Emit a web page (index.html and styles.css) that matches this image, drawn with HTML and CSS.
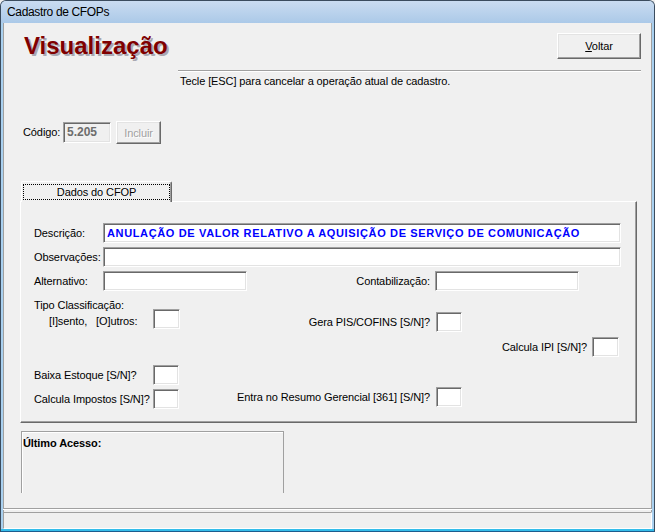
FILE: index.html
```html
<!DOCTYPE html>
<html lang="pt-BR">
<head>
<meta charset="utf-8">
<title>Cadastro de CFOPs</title>
<link rel="stylesheet" href="styles.css">
</head>
<body>
<div class="window">
  <div class="titlebar"><span class="title-text">Cadastro de CFOPs</span></div>
  <div class="frame">
    <div class="client">
      <div class="header">
        <h1 class="page-title">Visualização</h1>
        <button class="btn btn-voltar"><u>V</u>oltar</button>
      </div>
      <div class="rule"></div>
      <p class="hint">Tecle [ESC] para cancelar a operação atual de cadastro.</p>

      <div class="code-row">
        <span class="lbl code-lbl">Código:</span>
        <span class="field field-code">5.205</span>
        <button class="btn btn-incluir" disabled>Incluir</button>
      </div>

      <div class="tabs">
        <div class="tab"><span class="tab-focus">Dados do CFOP</span></div>
      </div>

      <div class="panel">
        <div class="row r-desc">
          <span class="lbl lbl-col">Descrição:</span>
          <span class="field field-wide desc-value">ANULAÇÃO DE VALOR RELATIVO A AQUISIÇÃO DE SERVIÇO DE COMUNICAÇÃO</span>
        </div>
        <div class="row r-obs">
          <span class="lbl lbl-col">Observações:</span>
          <span class="field field-wide"></span>
        </div>
        <div class="row r-alt">
          <span class="lbl lbl-col">Alternativo:</span>
          <span class="field field-mid"></span>
          <span class="lbl lbl-right w-contab">Contabilização:</span>
          <span class="field field-mid gap5"></span>
        </div>
        <div class="row r-tipo">
          <div class="tipo-label">
            <div>Tipo Classificação:</div>
            <div class="tipo-sub">[I]sento,&nbsp;&nbsp; [O]utros:</div>
          </div>
          <span class="field field-small tipo-input"></span>
          <div class="pair pair-pis">
            <span class="lbl lbl-right w-pis">Gera PIS/COFINS [S/N]?</span>
            <span class="field field-small gap6"></span>
          </div>
        </div>
        <div class="row r-ipi">
          <span class="lbl lbl-right w-ipi">Calcula IPI [S/N]?</span>
          <span class="field field-small2 gap5"></span>
        </div>
        <div class="row r-baixa">
          <span class="lbl w-left">Baixa Estoque [S/N]?</span>
          <span class="field field-small"></span>
        </div>
        <div class="row r-calc">
          <div class="pair pair-imp">
            <span class="lbl w-left">Calcula Impostos [S/N]?</span>
            <span class="field field-small"></span>
          </div>
          <div class="pair">
            <span class="lbl lbl-right w-resumo">Entra no Resumo Gerencial [361] [S/N]?</span>
            <span class="field field-small gap6"></span>
          </div>
        </div>
      </div>

      <div class="access">
        <span class="access-title">Último Acesso:</span>
      </div>

      <div class="footer">
        <div class="sep"></div>
        <div class="status"></div>
      </div>
    </div>
  </div>
</div>
</body>
</html>
```

FILE: styles.css
```css
* { box-sizing: border-box; }
html, body { margin: 0; padding: 0; }
body {
  width: 655px;
  height: 532px;
  overflow: hidden;
  background: #f0f0f0;
  font-family: "Liberation Sans", Arial, sans-serif;
  font-size: 11px;
  letter-spacing: -0.1px;
  color: #000;
}

.window {
  width: 655px;
  height: 532px;
  border: 1px solid #3b4c5e;
  border-bottom-color: #1d5c8e;
  border-radius: 6px 6px 0 0;
  display: flex;
  flex-direction: column;
  overflow: hidden;
  background: #a9d0ef;
}

.titlebar {
  height: 22px;
  flex: none;
  background: linear-gradient(#cadcf1, #abc9e8);
  padding-left: 6px;
  display: flex;
  align-items: center;
}
.title-text {
  font-size: 12px;
  line-height: 14px;
  letter-spacing: -0.35px;
  color: #000;
}

.frame {
  flex: 1;
  display: flex;
  padding: 0 2px;
  border-bottom: 2px solid #35bdea;
}

.client {
  flex: 1;
  display: flex;
  flex-direction: column;
  background: #f0f0f0;
  box-shadow: inset 1px 0 #a0a0a0, inset -1px 0 #a0a0a0;
}
.client > * { flex: none; }

/* header */
.header {
  display: flex;
  justify-content: space-between;
  align-items: flex-start;
  height: 36px;
  padding: 10px 11px 0 21px;
}
.page-title {
  margin: 0;
  font-size: 24px;
  line-height: 26px;
  font-weight: bold;
  letter-spacing: 0;
  color: #800000;
  text-shadow: 2px 2px 0 #a9a9b2;
}

.btn {
  font-family: inherit;
  font-size: 11px;
  letter-spacing: -0.1px;
  color: #000;
  background: #f0f0f0;
  border: 1px solid;
  border-color: #fff #696969 #696969 #fff;
  box-shadow: inset -1px -1px 0 #a0a0a0, inset 1px 1px 0 #e3e3e3;
  padding: 0;
  margin: 0;
}
.btn u { text-decoration: underline; }
.btn-voltar { width: 84px; height: 26px; }
.btn-incluir {
  width: 45px;
  height: 23px;
  margin-left: 5px;
  color: #a0a0a0;
  text-shadow: 1px 1px 0 #fff;
}

.rule {
  margin: 11px 11px 0 175px;
  border-top: 1px solid #a0a0a0;
  border-bottom: 1px solid #fff;
}
.hint {
  margin: 3px 0 0 177px;
  line-height: 13px;
}

/* generic text/field */
.lbl { display: block; line-height: 13px; white-space: nowrap; }
.lbl-right { text-align: right; }

.field {
  display: block;
  height: 20px;
  background: #fff;
  border: 1px solid;
  border-color: #a0a0a0 #fff #fff #a0a0a0;
  box-shadow: inset 1px 1px 0 #696969, inset -1px -1px 0 #e3e3e3;
  flex: none;
}

/* codigo row */
.code-row {
  display: flex;
  align-items: center;
  height: 23px;
  margin: 33px 0 0 20px;
}
.code-lbl { width: 40px; }
.field-code {
  width: 48px;
  height: 21px;
  background: #f0f0f0;
  color: #6d6d6d;
  font-size: 12px;
  font-weight: bold;
  letter-spacing: 0;
  line-height: 19px;
  padding-left: 3px;
}

/* tabs */
.tabs {
  position: relative;
  z-index: 1;
  display: flex;
  height: 21px;
  margin: 37px 0 -1px 18px;
}
.tab {
  width: 151px;
  height: 21px;
  background: #f0f0f0;
  border-top: 1px solid #fff;
  border-left: 1px solid #fff;
  border-right: 1px solid #696969;
  box-shadow: inset -1px 0 #a0a0a0;
  border-radius: 2px 2px 0 0;
  padding: 2px 1px 0 1px;
}
.tab-focus {
  display: block;
  height: 16px;
  border: 1px dotted #000;
  line-height: 14px;
  text-align: center;
}

/* panel */
.panel {
  width: 617px;
  height: 222px;
  margin-left: 17px;
  border: 1px solid;
  border-color: #fff #696969 #696969 #fff;
  box-shadow: inset -1px -1px 0 #a0a0a0;
  padding-left: 13px;
}
.row { display: flex; align-items: center; height: 20px; }
.lbl-col { width: 69px; }
.field-wide { width: 518px; }
.field-mid { width: 144px; }
.field-small { width: 26px; }
.field-small2 { width: 27px; }
.gap5 { margin-left: 5px; }
.gap6 { margin-left: 6px; }

.desc-value {
  color: #0000ff;
  font-weight: bold;
  letter-spacing: 0.64px;
  line-height: 18px;
  padding-left: 3px;
  white-space: nowrap;
  overflow: hidden;
}

.r-desc { margin-top: 21px; }
.r-obs { margin-top: 4px; }
.r-alt { margin-top: 4px; }
.w-contab { width: 183px; }

.r-tipo {
  margin-top: 6px;
  height: 35px;
  align-items: flex-start;
}
.tipo-label { width: 119px; line-height: 16px; }
.tipo-sub { padding-left: 15px; }
.tipo-input { width: 27px; margin-top: 12px; }
.pair { display: flex; align-items: center; }
.pair-pis { margin-top: 15px; }
.w-pis { width: 250px; }

.r-ipi { margin-top: 5px; }
.w-ipi { width: 553px; }

.r-baixa { margin-top: 8px; }
.w-left { width: 119px; }

.r-calc {
  margin-top: 2px;
  height: 22px;
  align-items: flex-start;
}
.pair-imp { margin-top: 2px; }
.w-resumo { width: 251px; }

/* ultimo acesso */
.access {
  width: 263px;
  height: 62px;
  margin: 8px 0 0 18px;
  border: 1px solid #a0a0a0;
  border-bottom: none;
  box-shadow: inset 1px 1px 0 #fff;
  padding: 5px 0 0 1px;
}
.access-title {
  display: block;
  font-weight: bold;
  line-height: 13px;
}

/* footer */
.footer { margin-top: auto; }
.sep {
  border-top: 1px solid #a0a0a0;
  border-bottom: 1px solid #fff;
  margin-bottom: 2px;
}
.status {
  height: 17px;
  border: 1px solid;
  border-color: #a0a0a0 #fff #fff #a0a0a0;
}
```
